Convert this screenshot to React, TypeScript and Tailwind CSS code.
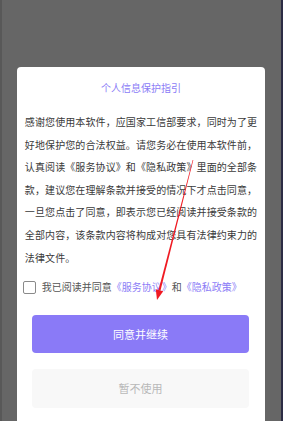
import React, { useState } from "react";

const lines = [
  "感谢您使用本软件，应国家工信部要求，同时为了更",
  "好地保护您的合法权益。请您务必在使用本软件前，",
  "认真阅读《服务协议》和《隐私政策》里面的全部条",
  "款，建议您在理解条款并接受的情况下才点击同意，",
  "一旦您点击了同意，即表示您已经阅读并接受条款的",
  "全部内容，该条款内容将构成对您具有法律约束力的",
  "法律文件。",
];

export default function App() {
  const [agreed, setAgreed] = useState(false);

  return (
    <div
      className="relative flex h-[421px] w-[283px] overflow-hidden bg-[#666666]"
      style={{ fontFamily: '"Noto Sans CJK SC", "Noto Sans", sans-serif' }}
    >
      <div className="w-[2px] bg-[#585858]" />
      <div className="flex-1 pl-[15px] pr-[16px] pt-[67px]">
        <div className="h-full rounded-t-[4px] bg-white">
          <div className="pt-[15px] text-center text-[10px] leading-[12px] text-[#8b7cf6]">
            个人信息保护指引
          </div>

          <div className="mt-[17px] px-[8px] text-[10px] leading-[22.6px] tracking-[0.1px] text-[#3a3a3a]">
            {lines.map((l) => (
              <div key={l} className="whitespace-nowrap">
                {l}
              </div>
            ))}
          </div>

          <div className="mt-[11px] flex h-[14px] items-center pl-[6px] text-[10px] leading-[14px]">
            <button
              onClick={() => setAgreed(!agreed)}
              className="h-[13px] w-[13px] rounded-[2px] border border-[#8a8a8a] bg-white"
            >
              {agreed && <span className="block h-full w-full bg-[#8b7cf6]" />}
            </button>
            <span className="ml-[6px] text-[#555555]">我已阅读并同意</span>
            <span className="text-[#8b7cf6]">《服务协议》</span>
            <span className="text-[#555555]">和</span>
            <span className="text-[#8b7cf6]">《隐私政策》</span>
          </div>

          <div className="pl-[15px] pr-[16px]">
            <button className="mt-[21px] flex h-[38px] w-full items-center justify-center rounded-[4px] bg-[#8a7af7] text-[11px] text-white">
              同意并继续
            </button>
            <button className="mt-[16px] flex h-[39px] w-full items-center justify-center rounded-[4px] bg-[#f8f8f8] text-[11px] text-[#b8b8b8]">
              暂不使用
            </button>
          </div>
        </div>
      </div>
      <div className="w-[2px] bg-[#2c2c44]" />

      {/* red annotation arrow */}
      <svg
        className="pointer-events-none absolute left-0 top-0"
        width="283"
        height="421"
        viewBox="0 0 283 421"
      >
        <polygon
          points="193.3,160 192.7,160 158.5,290.1 160.5,290.6"
          fill="#f01a22"
        />
        <polygon points="157,300 163.2,291.3 155.8,289.3" fill="#f01a22" />
      </svg>
    </div>
  );
}
